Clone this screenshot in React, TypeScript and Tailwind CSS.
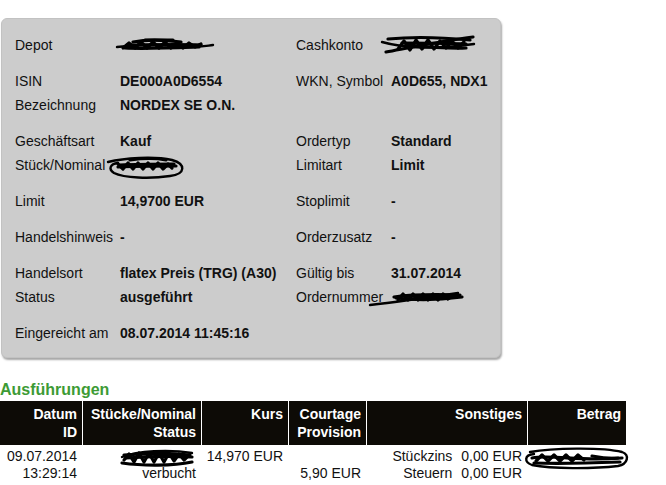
import React from "react";

const font = "font-['Liberation_Sans',Arial,sans-serif]";

function Scribble({ w, h, paths, className = "" }: { w: number; h: number; paths: string[]; className?: string }) {
  return (
    <svg width={w} height={h} viewBox={`0 0 ${w} ${h}`} className={className} fill="none">
      {paths.map((d, i) => (
        <path key={i} d={d} stroke="#000" strokeWidth={i === 0 ? 2.4 : 3.2} strokeLinecap="round" strokeLinejoin="round" />
      ))}
    </svg>
  );
}

const Label = ({ children }: { children?: React.ReactNode }) => (
  <div className="h-6 leading-6 whitespace-nowrap">{children}</div>
);
const Value = ({ children }: { children?: React.ReactNode }) => (
  <div className="h-6 leading-6 font-bold whitespace-nowrap">{children}</div>
);

function Row({ a, b, c, d }: { a?: React.ReactNode; b?: React.ReactNode; c?: React.ReactNode; d?: React.ReactNode }) {
  return (
    <div className="grid grid-cols-[105px_176px_95px_1fr]">
      <Label>{a}</Label>
      <Value>{b}</Value>
      <Label>{c}</Label>
      <Value>{d}</Value>
    </div>
  );
}

export default function App() {
  return (
    <div className={`${font} text-[14px] text-[#111] bg-white w-[666px] h-[485px] overflow-hidden`}>
      <div className="pt-[18px] pl-px">
        <div className="w-[500px] h-[340px] bg-[#cccccc] border border-[#c2c2c2] rounded-[6px] shadow-[1px_2px_2px_rgba(0,0,0,0.35)] pl-[13px] pt-[14px] flex flex-col gap-3">
          <Row
            a="Depot"
            b={
              <span className="inline-flex items-center h-6">
                <Scribble
                  w={100}
                  h={18}
                  className="-ml-[5px]"
                  paths={[
                    "M2 11 C 20 9, 45 8, 65 10 S 90 10, 98 9",
                    "M8 12 L 14 7 L 20 12 L 26 6 L 32 12 L 38 6 L 44 12 L 50 6 L 56 12 L 62 7 L 68 12 L 74 7 L 80 11 L 86 8",
                    "M18 6 C 34 3, 50 4, 66 6",
                    "M10 12 C 30 13, 55 12, 84 11",
                    "M12 9 C 35 9, 60 8, 86 9",
                    "M30 4 L 58 4",
                  ]}
                />
              </span>
            }
            c="Cashkonto"
            d={
              <span className="inline-flex items-center h-6">
                <Scribble
                  w={100}
                  h={22}
                  className="-ml-[13px]"
                  paths={[
                    "M4 8 C 25 14, 60 16, 96 10",
                    "M10 5 C 30 3, 60 3, 92 6",
                    "M20 15 L 26 7 L 32 16 L 38 6 L 44 15 L 50 6 L 56 15 L 62 7 L 68 14 L 74 7 L 80 14 L 86 8",
                    "M8 18 C 40 12, 70 6, 95 3",
                    "M30 11 C 50 13, 70 15, 88 14",
                    "M24 9 C 44 9, 66 9, 88 10",
                  ]}
                />
              </span>
            }
          />
          <div>
            <Row a="ISIN" b="DE000A0D6554" c="WKN, Symbol" d="A0D655, NDX1" />
            <Row a="Bezeichnung" b="NORDEX SE O.N." />
          </div>
          <div>
            <Row a="Geschäftsart" b="Kauf" c="Ordertyp" d="Standard" />
            <Row
              a="Stück/Nominal"
              b={
                <span className="inline-flex items-center h-6">
                  <Scribble
                    w={82}
                    h={26}
                    className="-ml-[16px] mt-[4px]"
                    paths={[
                      "M4 8 C 20 4, 50 2, 68 6 C 82 10, 82 20, 66 22 C 46 25, 20 24, 10 19 C 4 15, 6 10, 14 9",
                      "M14 10 L 19 15 L 24 9 L 29 15 L 34 9 L 39 15 L 44 9 L 49 15 L 54 9 L 59 15 L 64 10 L 68 14",
                      "M14 13 C 30 12, 50 12, 72 12",
                      "M26 6 C 40 4, 52 4, 62 6",
                      "M16 11 C 34 10, 54 10, 70 10",
                    ]}
                  />
                </span>
              }
              c="Limitart"
              d="Limit"
            />
          </div>
          <Row a="Limit" b="14,9700 EUR" c="Stoplimit" d="-" />
          <Row a="Handelshinweis" b="-" c="Orderzusatz" d="-" />
          <div>
            <Row a="Handelsort" b="flatex Preis (TRG) (A30)" c="Gültig bis" d="31.07.2014" />
            <div className="grid grid-cols-[105px_176px_95px_1fr]">
              <Label>Status</Label>
              <Value>ausgeführt</Value>
              <Label>Ordernummer</Label>
              <div className="relative h-6">
                <Scribble
                  w={96}
                  h={20}
                  className="absolute -left-[23px] top-[4px]"
                  paths={[
                    "M2 16 C 20 14, 50 10, 90 4",
                    "M26 8 C 40 6, 60 5, 92 6",
                    "M30 11 L 35 5 L 40 11 L 45 5 L 50 11 L 55 5 L 60 11 L 65 5 L 70 11 L 75 5 L 80 10 L 86 6",
                    "M28 9 C 45 11, 70 11, 94 8",
                    "M34 7 C 50 8, 70 8, 90 7",
                  ]}
                />
              </div>
            </div>
          </div>
          <Row a="Eingereicht am" b="08.07.2014 11:45:16" />
        </div>
      </div>

      <div className="mt-[23px] text-[16px] leading-[18px] font-bold text-[#3d9b35]">Ausführungen</div>

      <div className="mt-[2px] w-[626px] grid grid-cols-[82px_118px_86px_77px_160px_98px] gap-x-px">
        {[
          ["Datum", "ID"],
          ["Stücke/Nominal", "Status"],
          ["Kurs", ""],
          ["Courtage", "Provision"],
          ["Sonstiges", ""],
          ["Betrag", ""],
        ].map(([l1, l2], i) => (
          <div key={i} className="bg-[#0d0b06] text-white font-bold text-right h-[44px] pt-[4px] pr-[5px] leading-[18px]">
            <div className="h-[18px]">{l1}</div>
            <div className="h-[18px]">{l2}</div>
          </div>
        ))}

        <div className="text-right pr-[5px] pt-[3px] leading-[17px]">
          <div>09.07.2014</div>
          <div>13:29:14</div>
        </div>
        <div className="text-right pr-[5px] pt-[3px] leading-[17px]">
          <div className="h-[17px] flex justify-end">
            <Scribble
              w={78}
              h={22}
              className="-mt-[1px]"
              paths={[
                "M4 10 C 20 4, 50 2, 74 6",
                "M6 13 L 11 7 L 16 15 L 21 6 L 26 15 L 31 6 L 36 15 L 41 6 L 46 15 L 51 6 L 56 14 L 61 7 L 66 13 L 71 8",
                "M4 16 C 25 19, 55 19, 74 15",
                "M8 11 C 30 9, 55 9, 74 10",
                "M6 8 C 30 6, 55 6, 72 8",
              ]}
            />
          </div>
          <div>verbucht</div>
        </div>
        <div className="text-right pr-[5px] pt-[3px] leading-[17px]">
          <div>14,970 EUR</div>
        </div>
        <div className="text-right pr-[5px] pt-[3px] leading-[17px]">
          <div className="h-[17px]" />
          <div>5,90 EUR</div>
        </div>
        <div className="pr-[5px] pt-[3px] leading-[17px] flex justify-end">
          <div className="grid grid-cols-[auto_auto] gap-x-[9px] text-right">
            <div>Stückzins</div>
            <div>0,00 EUR</div>
            <div>Steuern</div>
            <div>0,00 EUR</div>
          </div>
        </div>
        <div className="relative pt-[3px] leading-[17px]">
          <Scribble
            w={108}
            h={24}
            className="absolute -left-[6px] top-[1px]"
            paths={[
              "M8 6 C 30 2, 80 1, 100 6 C 108 9, 106 18, 96 20 C 70 23, 30 23, 10 19 C 2 16, 2 9, 12 8",
              "M10 12 C 30 8, 60 16, 96 12",
              "M14 15 L 20 9 L 26 15 L 32 9 L 38 15 L 44 9 L 50 15 L 56 9 L 62 14",
              "M70 10 C 80 12, 90 13, 100 12",
              "M12 17 C 40 18, 70 17, 98 16",
            ]}
          />
        </div>
      </div>
    </div>
  );
}
